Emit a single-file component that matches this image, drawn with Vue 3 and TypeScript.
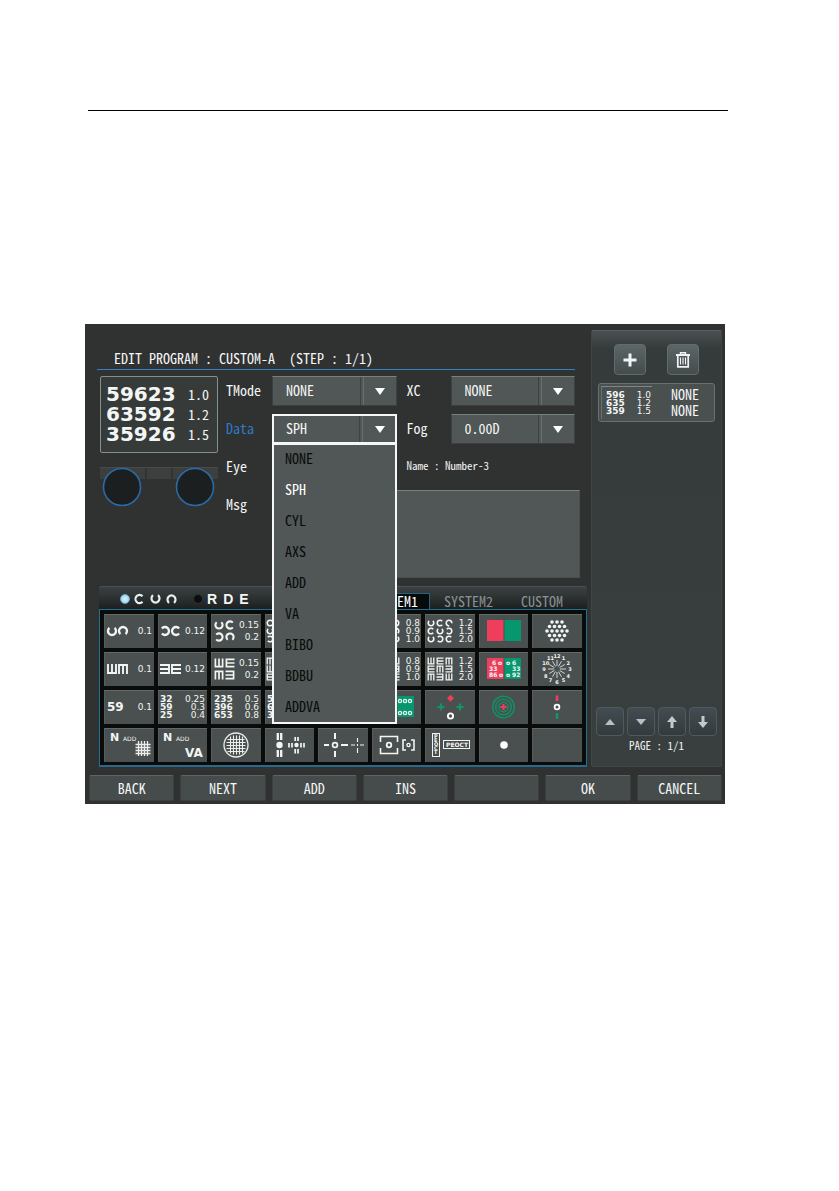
<script setup lang="ts">
import { ref } from 'vue'

interface Optotype { kind: 'C' | 'E'; x: number; y: number; turn: number; size: number }
interface Label { text: string; x: number; y: number; size: number; bold?: boolean; end?: boolean }
interface Chart { id: string; title: string; marks: Optotype[]; labels: Label[]; art?: string }

const dataOptions = ['NONE', 'SPH', 'CYL', 'AXS', 'ADD', 'VA', 'BIBO', 'BDBU', 'ADDVA']
const data = ref('SPH')
const open = ref(true)
const tmode = ref('NONE')
const xc = ref('NONE')
const fog = ref('0.00D')
const eye = ref('')
const message = ref('')
const filter = ref('c')
const activeTab = ref('SYSTEM1')
const tabs = ['SYSTEM1', 'SYSTEM2', 'CUSTOM']
const footer = ['BACK', 'NEXT', 'ADD', 'INS', '', 'OK', 'CANCEL']
const preview = [['59623', '1.0'], ['63592', '1.2'], ['35926', '1.5']]

function pick(option: string) {
  data.value = option
  open.value = false
}

const num = (text: string, y: number): Label => ({ text, x: 48, y, size: 9, end: true })
const single = (kind: 'C' | 'E', turns: number[], va: string): Chart => ({
  id: '', title: `${kind} chart ${va}`,
  marks: turns.map((turn, i) => ({ kind, x: 8 + i * 11, y: 17, turn, size: 10 })),
  labels: [num(va, 20)]
})
const double = (kind: 'C' | 'E', turns: number[]): Chart => ({
  id: '', title: `${kind} chart 0.15`,
  marks: turns.map((turn, i) => ({ kind, x: 8 + (i % 2) * 11, y: 11 + Math.floor(i / 2) * 12, turn, size: 9 })),
  labels: [num('0.15', 14), num('0.2', 26)]
})
const triple = (kind: 'C' | 'E', turns: number[], va: string[]): Chart => ({
  id: '', title: `${kind} chart`,
  marks: turns.map((turn, i) => ({ kind, x: 6 + (i % 3) * 9, y: 9 + Math.floor(i / 3) * 8, turn, size: 7 })),
  labels: va.map((v, i) => num(v, 12 + i * 8))
})
const digits = (rows: string[], va: string[]): Chart => ({
  id: '', title: 'Number chart', marks: [],
  labels: [
    ...rows.map((r, i): Label => ({ text: r, x: 3, y: 12 + i * 8, size: 9, bold: true })),
    ...va.map((v, i) => num(v, 12 + i * 8))
  ]
})
const art = (name: string, title: string, labels: Label[] = []): Chart => ({ id: '', title, marks: [], labels, art: name })

const charts: Chart[] = [
  single('C', [270, 90], '0.1'),
  single('C', [180, 0], '0.12'),
  double('C', [270, 0, 180, 90]),
  triple('C', [0, 90, 180, 270, 0, 90, 180, 0, 270], []),
  triple('C', [0, 90, 180, 270, 0, 90, 180, 0, 270], []),
  triple('C', [0, 90, 180, 270, 0, 90, 180, 0, 270], ['0.8', '0.9', '1.0']),
  triple('C', [270, 0, 45, 0, 270, 180, 270, 180, 0], ['1.2', '1.5', '2.0']),
  art('redgreen', 'Red-green'),
  art('dots', 'Dots'),
  single('E', [270, 90], '0.1'),
  single('E', [180, 0], '0.12'),
  double('E', [270, 0, 90, 180]),
  triple('E', [90, 0, 90, 270, 180, 0, 0, 90, 270], []),
  triple('E', [0, 90, 180, 270, 0, 90, 180, 0, 270], []),
  triple('E', [0, 90, 270, 270, 0, 180, 180, 90, 0], ['0.8', '0.9', '1.0']),
  triple('E', [270, 0, 90, 0, 90, 180, 90, 180, 270], ['1.2', '1.5', '2.0']),
  art('rgdigits', 'Red-green numbers'),
  art('clock', 'Astigmatism clock'),
  { id: '', title: 'Number chart 0.1', marks: [], labels: [{ text: '59', x: 3, y: 21, size: 12, bold: true }, num('0.1', 20)] },
  digits(['32', '59', '25'], ['0.25', '0.3', '0.4']),
  digits(['235', '396', '653'], ['0.5', '0.6', '0.8']),
  digits(['5', '6', '3'], []),
  digits([], []),
  art('rgdots', 'Red-green balance'),
  art('worth', 'Worth four dots'),
  art('rings', 'Rings'),
  art('schober', 'Vertical dots'),
  art('neargrid', 'Near ADD grid', [{ text: 'N', x: 6, y: 13, size: 11, bold: true }, { text: 'ADD', x: 19, y: 13, size: 6 }]),
  art('none', 'Near ADD VA', [{ text: 'N', x: 6, y: 13, size: 11, bold: true }, { text: 'ADD', x: 19, y: 13, size: 6 }, { text: 'VA', x: 28, y: 29, size: 12, bold: true }]),
  art('amsler', 'Cross grid'),
  art('bars', 'Bar phoria'),
  art('cross', 'Cross phoria'),
  art('frames', 'Aniseikonia'),
  art('fixation', 'Fixation disparity'),
  art('point', 'Fixation point'),
  art('none', 'Empty')
].map((c, i) => ({ ...c, id: `chart-${i}` }))

const dotRows = [3, 4, 5, 4, 3].flatMap((n, r) =>
  Array.from({ length: n }, (_, i) => ({ x: 25 + (i - (n - 1) / 2) * 5, y: 8 + r * 4.5 })))
const hours = Array.from({ length: 12 }, (_, i) => {
  const a = ((i + 1) * Math.PI) / 6
  return { n: i + 1, sx: Math.sin(a), sy: -Math.cos(a) }
})
</script>

<template>
  <main class="page">
    <hr class="rule" />
    <section class="device">
      <div class="upper">
        <div class="work">
          <h1 class="title">EDIT PROGRAM : CUSTOM-A&nbsp; (STEP : 1/1)</h1>
          <div class="setup">
            <div class="left">
              <div class="preview">
                <div v-for="row in preview" :key="row[0]" class="preview-row">
                  <b>{{ row[0] }}</b><span>{{ row[1] }}</span>
                </div>
              </div>
              <svg class="lenses" width="118" height="42" viewBox="0 0 118 42" aria-hidden="true">
                <rect y="0" width="118" height="12" fill="#3d3f3f" />
                <path d="M46 0V12M72 0V12" stroke="#292a2a" />
                <path d="M0 .5H118" stroke="#484a4a" />
                <circle cx="22" cy="20" r="18.5" fill="#1b1f1f" stroke="#2a6ba5" stroke-width="1.6" />
                <circle cx="95" cy="20" r="18.5" fill="#1b1f1f" stroke="#2a6ba5" stroke-width="1.6" />
              </svg>
            </div>
            <form class="form" @submit.prevent>
              <div class="row">
                <label for="tmode">TMode</label>
                <div class="pick">
                  <select id="tmode" v-model="tmode"><option>NONE</option></select>
                  <svg class="arrow" width="10" height="8" viewBox="0 0 10 8"><path d="M0 0H10L5 7Z" fill="#fff" /></svg>
                </div>
                <label class="second" for="xc">XC</label>
                <div class="pick">
                  <select id="xc" v-model="xc"><option>NONE</option></select>
                  <svg class="arrow" width="10" height="8" viewBox="0 0 10 8"><path d="M0 0H10L5 7Z" fill="#fff" /></svg>
                </div>
              </div>
              <div class="row">
                <label class="current" for="data">Data</label>
                <div class="pick opened">
                  <select id="data" v-model="data" @mousedown.prevent="open = !open">
                    <option v-for="o in dataOptions" :key="o">{{ o }}</option>
                  </select>
                  <svg class="arrow" width="10" height="8" viewBox="0 0 10 8"><path d="M0 0H10L5 7Z" fill="#fff" /></svg>
                  <ul v-if="open" class="menu" role="listbox" aria-label="Data">
                    <li v-for="o in dataOptions" :key="o" role="option" :aria-selected="o === data" :class="{ chosen: o === data }" @click="pick(o)">{{ o }}</li>
                  </ul>
                </div>
                <label class="second" for="fog">Fog</label>
                <div class="pick">
                  <select id="fog" v-model="fog"><option>0.00D</option></select>
                  <svg class="arrow" width="10" height="8" viewBox="0 0 10 8"><path d="M0 0H10L5 7Z" fill="#fff" /></svg>
                </div>
              </div>
              <div class="row">
                <label for="eye">Eye</label>
                <div class="pick">
                  <select id="eye" v-model="eye"><option></option></select>
                </div>
                <span class="name">Name : Number-3</span>
              </div>
              <div class="row message">
                <label for="msg">Msg</label>
                <textarea id="msg" v-model="message"></textarea>
              </div>
            </form>
          </div>
          <div class="charts">
            <div class="bar">
              <div class="filters">
                <label class="filter">
                  <input v-model="filter" type="radio" name="filter" value="c" aria-label="Landolt rings" />
                  <svg width="44" height="12" viewBox="0 0 44 12" fill="none" stroke="#e8eded" stroke-width="2.2">
                    <path d="M8.5 3.2A4 4.2 0 1 0 8.5 8.8" />
                    <path d="M19 2.2A4 4.2 0 1 0 24 2.2" />
                    <path d="M35 9.8A4 4.2 0 1 1 40 9.8" />
                  </svg>
                </label>
                <label class="filter">
                  <input v-model="filter" type="radio" name="filter" value="r" />
                  <span class="letters"><b>R</b><b>D</b><b>E</b></span>
                </label>
              </div>
              <div class="tabs" role="tablist">
                <button v-for="t in tabs" :key="t" type="button" role="tab" :aria-selected="t === activeTab" :class="{ active: t === activeTab }" @click="activeTab = t">{{ t }}</button>
              </div>
            </div>
            <div class="grid">
              <button v-for="c in charts" :key="c.id" type="button" class="cell" :aria-label="c.title">
                <svg width="50" height="34" viewBox="0 0 50 34" fill="none">
                  <g v-for="(m, i) in c.marks" :key="i" :transform="`translate(${m.x} ${m.y}) rotate(${m.turn}) scale(${m.size / 9})`" stroke="#f1f5f4">
                    <path v-if="m.kind === 'C'" d="M2.8 -2.3A3.6 3.6 0 1 0 2.8 2.3" stroke-width="2.1" />
                    <path v-else d="M4.5 -3.6H-3.6V3.6H4.5M-4 0H4.5" stroke-width="1.7" />
                  </g>
                  <g v-if="c.art === 'redgreen' || c.art === 'rgdigits' || c.art === 'rgdots'">
                    <path d="M8 6H25V27H8Z" fill="#ee3e5b" />
                    <path d="M25 6H42V27H25Z" fill="#07976f" />
                    <path d="M25 6V27" stroke="#46504e" />
                  </g>
                  <g v-if="c.art === 'rgdigits'" class="tiny">
                    <text x="13" y="13">6</text><text x="19" y="13">o</text>
                    <text x="10" y="19">33</text>
                    <text x="10" y="25">86</text><text x="20" y="25">o</text>
                    <text x="27" y="13">o</text><text x="33" y="13">6</text>
                    <text x="33" y="19">33</text>
                    <text x="27" y="25">o</text><text x="33" y="25">92</text>
                  </g>
                  <g v-if="c.art === 'rgdots'" stroke="#e5f2ee" stroke-width="1.3">
                    <circle v-for="x in [12, 17, 22, 28, 33, 38]" :key="x" :cx="x" cy="11" r="1.6" />
                    <circle v-for="x in [12, 17, 22, 28, 33, 38]" :key="-x" :cx="x" cy="23" r="1.6" />
                  </g>
                  <g v-if="c.art === 'dots'" fill="#f1f5f4">
                    <circle v-for="(d, i) in dotRows" :key="i" :cx="d.x" :cy="d.y" r="1.8" />
                  </g>
                  <g v-if="c.art === 'clock'" class="tiny mid">
                    <path v-for="h in hours" :key="h.n" :d="`M${25 + h.sx * 3} ${17 + h.sy * 3}L${25 + h.sx * 9} ${17 + h.sy * 9}`" stroke="#dfe5e3" stroke-width="0.9" />
                    <text v-for="h in hours" :key="-h.n" :x="25 + h.sx * 13" :y="19 + h.sy * 13">{{ h.n }}</text>
                  </g>
                  <g v-if="c.art === 'worth'">
                    <path d="M25.5 4.8L29 8.3L25.5 11.8L22 8.3Z" fill="#ee3e5b" />
                    <path d="M16 13.5V20.5M12.5 17H19.5M35 13.5V20.5M31.5 17H38.5" stroke="#129463" stroke-width="2.2" />
                    <circle cx="25.5" cy="26" r="2.6" stroke="#fff" stroke-width="1.9" />
                  </g>
                  <g v-if="c.art === 'rings'" stroke="#118f63" stroke-width="1.5">
                    <circle cx="24.5" cy="17" r="10.8" /><circle cx="24.5" cy="17" r="7.8" /><circle cx="24.5" cy="17" r="4.7" />
                    <path d="M24.5 14V20M21.5 17H27.5" stroke="#ee3e5b" stroke-width="2" />
                  </g>
                  <g v-if="c.art === 'schober'" stroke-width="2.6">
                    <path d="M25 5.5V11" stroke="#ee3e5b" /><path d="M25 23V29" stroke="#129463" />
                    <circle cx="25" cy="17" r="2.4" stroke="#fff" stroke-width="1.8" />
                  </g>
                  <g v-if="c.art === 'neargrid'" stroke="#e9eeec" stroke-width="1.3">
                    <path d="M34.500 13V28M37.500 13V28M40.500 13V28M43.500 13V28M31.500 16.500H46.500M31.500 19.500H46.500M31.500 22.500H46.500M31.500 25.500H46.500" />
                  </g>
                  <g v-if="c.art === 'amsler'" stroke="#e9eeec" stroke-width="1.1">
                    <circle cx="25" cy="17" r="12" stroke-width="1.3" />
                    <path d="M19.500 8.500V25.500M22.500 7.500V26.500M25.500 7.500V26.500M28.500 7.500V26.500M31.500 8.500V25.500M16.500 11.500H33.500M15.500 14.500H34.500M15.500 17.500H34.500M15.500 20.500H34.500M16.500 23.500H33.500" />
                  </g>
                  <g v-if="c.art === 'bars'" stroke="#f1f5f4">
                    <circle cx="15.500" cy="17" r="3.200" fill="#f1f5f4" stroke="none" />
                    <path d="M13.800 5V12M17.200 5V12M13.800 22V29M17.200 22V29" stroke-width="2.300" />
                    <circle cx="32.500" cy="17" r="2.200" fill="#f1f5f4" stroke="none" />
                    <path d="M25 15V19.500M28 15V19.500M37 15V19.500M40 15V19.500M31.200 9V13M34 9V13M31.200 21V25.500M34 21V25.500" stroke-width="1.700" />
                  </g>
                  <g v-if="c.art === 'cross'" stroke="#f1f5f4">
                    <circle cx="17" cy="17" r="2.400" stroke-width="1.700" />
                    <path d="M6 17H11M23 17H30M17 5V11M17 23V29" stroke-width="2" />
                    <path d="M33 17H37M42 17H46M39.500 10V14M39.500 20V25M39.500 16V18" stroke-width="1.100" />
                  </g>
                  <g v-if="c.art === 'frames'" stroke="#f1f5f4">
                    <path d="M8.500 14V8.500H25.500V14M25.500 20V25.500H8.500V20" stroke-width="1.600" />
                    <circle cx="17" cy="17" r="2.300" stroke-width="1.800" />
                    <path d="M34 12H31V22H34M39 12H42V22H39" stroke-width="1.600" />
                    <circle cx="36.500" cy="17" r="1.600" stroke-width="1.400" />
                  </g>
                  <g v-if="c.art === 'fixation'" class="tiny">
                    <rect x="7.500" y="5.500" width="7" height="23" stroke="#f1f5f4" />
                    <text v-for="(l, i) in ['P', 'E', 'O', 'C', 'T']" :key="l" class="stacked" x="9" :y="10 + i * 4">{{ l }}</text>
                    <rect x="18.500" y="12.500" width="26" height="8" stroke="#f1f5f4" />
                    <text x="21" y="19">PEOCT</text>
                  </g>
                  <circle v-if="c.art === 'point'" cx="25" cy="17" r="3.800" fill="#fff" />
                  <text v-for="(l, i) in c.labels" :key="`t${i}`" class="chart-text" :class="{ bold: l.bold, end: l.end }" :x="l.x" :y="l.y" :font-size="l.size">{{ l.text }}</text>
                </svg>
              </button>
            </div>
          </div>
        </div>
        <aside class="side">
          <div class="tools">
            <button type="button" aria-label="Add step">
              <svg width="14" height="14" viewBox="0 0 14 14"><path d="M7 0.500V13.500M0.500 7H13.500" stroke="#f0f4f4" stroke-width="3" /></svg>
            </button>
            <button type="button" aria-label="Delete step">
              <svg width="16" height="16" viewBox="0 0 16 16" fill="none" stroke="#eef2f2">
                <path d="M5.500 2V.800H10.500V2" stroke-width="1.400" /><path d="M1 3H15" stroke-width="2" />
                <path d="M2.800 4V14.800H13.200V4" stroke-width="1.700" /><path d="M5.500 5.500V12.500M8 5.500V12.500M10.500 5.500V12.500" stroke-width="1.100" />
              </svg>
            </button>
          </div>
          <button type="button" class="step">
            <span class="thumb">
              <span><b>596</b><i>1.0</i></span><span><b>635</b><i>1.2</i></span><span><b>359</b><i>1.5</i></span>
            </span>
            <span class="modes"><span>NONE</span><span>NONE</span></span>
          </button>
          <div class="pager">
            <button type="button" aria-label="Page up"><svg width="10" height="12" viewBox="0 0 10 12"><path d="M0 9H10L5 3Z" fill="#b9bfc0" /></svg></button>
            <button type="button" aria-label="Page down"><svg width="10" height="12" viewBox="0 0 10 12"><path d="M0 3H10L5 9Z" fill="#b9bfc0" /></svg></button>
            <button type="button" aria-label="Move up"><svg width="10" height="12" viewBox="0 0 10 12"><path d="M5 0L10 6H6.500V12H3.500V6H0Z" fill="#c3c9ca" /></svg></button>
            <button type="button" aria-label="Move down"><svg width="10" height="12" viewBox="0 0 10 12"><path d="M5 12L10 6H6.500V0H3.500V6H0Z" fill="#c3c9ca" /></svg></button>
          </div>
          <p class="page-count">PAGE : 1/1</p>
        </aside>
      </div>
      <nav class="footer">
        <button v-for="(f, i) in footer" :key="i" type="button" :aria-label="f || 'Unassigned'">{{ f }}</button>
      </nav>
    </section>
  </main>
</template>

<style>
body { background: #fff; }
</style>

<style scoped>
* { box-sizing: border-box; }
.page { padding: 110px 114px 40px 85px; }
.rule { height: 1px; border: 0; margin: 0 -3px 213px 3px; background: #000; }
.device, .device button, .device select {
  font-family: "Noto Sans Mono CJK JP", "Noto Sans CJK JP", "Liberation Mono", monospace;
  font-feature-settings: "hwid";
  font-size: 14px;
  font-weight: 500;
  color: #f4f6f6;
}
.device { background: #303131; padding: 6px 3px 3px 4px; }
.device button { cursor: pointer; padding: 0; }
.upper { display: flex; }
.work { flex: 1; min-width: 0; padding: 0 4px 0 8px; }
.title { margin: 0 12px 6px 0; padding: 18px 0 0 17px; height: 40px; line-height: 20px; font-size: 14px; font-weight: 500; white-space: nowrap; border-bottom: 1px solid #3584c6; }
.setup { display: flex; gap: 8px; padding: 0 7px 0 3px; margin-bottom: 8px; }
.left { width: 118px; }
.preview { height: 77px; border: 1px solid #84908b; border-radius: 2px; background: #363b3a; padding: 8px 8px 8px 5px; display: flex; flex-direction: column; justify-content: space-between; }
.preview-row { display: flex; justify-content: space-between; align-items: center; height: 19px; }
.preview-row b { font: bold 20px/19px "DejaVu Sans", sans-serif; }
.preview-row span { font-size: 14px; line-height: 16px; padding-bottom: 2px; font-weight: 400; }
.lenses { display: block; margin-top: 14px; }
.form { flex: 1; min-width: 0; display: flex; flex-direction: column; gap: 8px; }
.row { display: grid; grid-template-columns: 46px minmax(0, 1fr) 54px minmax(0, 1fr); height: 30px; padding-right: 5px; }
.row label { line-height: 28px; }
.row .second { padding-left: 10px; }
.row .current { color: #2c7cc4; }
.name { grid-column: 3 / 5; padding-left: 10px; font-size: 11px; line-height: 26px; font-weight: 400; white-space: nowrap; }
.pick { position: relative; display: flex; background: #505756; border: 1px solid #3b4040; border-top-color: #77807d; }
.pick::after { content: ""; position: absolute; top: 0; bottom: 0; right: 32px; width: 2px; border-left: 1px solid #3c4443; border-right: 1px solid #69716f; pointer-events: none; }
.pick select { appearance: none; flex: 1; min-width: 0; border: 0; outline: 0; background: transparent; padding: 0 36px 2px 13px; }
.arrow { position: absolute; right: 11px; top: 11px; pointer-events: none; }
.opened { border: 2px solid #f5f7f6; z-index: 2; }
.opened select { padding-left: 12px; }
.opened .arrow { right: 10px; top: 10px; }
.menu { position: absolute; z-index: 3; top: 27px; left: -2px; right: -2px; margin: 0; padding: 0 0 2px; list-style: none; background: #505756; border: 2px solid #f5f7f6; }
.menu li { line-height: 27px; padding-left: 11px; color: #080a0a; cursor: pointer; }
.menu li + li { margin-top: 4px; }
.menu .chosen { color: #fff; }
.row.message { grid-template-columns: 46px minmax(0, 1fr); height: 88px; padding: 0; }
textarea { resize: none; border: 1px solid #474e4c; border-top-color: #78807e; background: #505756; color: #fff; padding: 6px; outline: 0; }
.charts { margin: 0 0 0 2px; }
.bar { height: 23px; display: flex; justify-content: space-between; border-top: 1px solid #4b5152; border-radius: 3px 3px 0 0; background: linear-gradient(#3b4142, #1c2021); }
.filters { display: flex; align-items: center; gap: 15px; padding: 2px 0 0 21px; }
.filter { display: flex; align-items: center; gap: 4px; }
.filter input { appearance: none; width: 10px; height: 10px; margin: 0; border-radius: 50%; background: #0b0e0f; border: 1px solid #2d3537; }
.filter input:checked { background: radial-gradient(#d5f3ff, #8ecbea); border-color: #6fa9c4; }
.letters { display: flex; gap: 6px; }
.letters b { font: bold 14px/18px "Liberation Sans", Arial, sans-serif; }
.tabs { display: flex; padding: 6px 10px 0 0; }
.tabs button { height: 16px; border: 0; background: transparent; color: #8b9192; line-height: 15px; padding: 0 14px; font-weight: 400; white-space: nowrap; }
.tabs .active { color: #fff; background: #070a0b; border: 1px solid #23637f; border-bottom: 0; padding: 0 11px; line-height: 13px; font-weight: 500; }
.grid { display: grid; grid-template-columns: repeat(9, minmax(0, 1fr)); grid-auto-rows: 34px; gap: 4px; background: #0a0c0c; border: 1px solid #22708f; border-bottom: 2px solid #2a6890; padding: 4px 4px 3px; }
.cell { display: flex; justify-content: center; overflow: hidden; border: 0; background: #4a504f; box-shadow: inset 0 1px #626967, inset 1px 0 #565d5b; }
.cell svg { flex: none; }
.chart-text { font-family: "DejaVu Sans", sans-serif; font-weight: 400; font-feature-settings: normal; fill: #f1f5f4; }
.bold { font-weight: 700; }
.end { text-anchor: end; }
.tiny text { font: bold 6px "DejaVu Sans", sans-serif; fill: #f4f8f6; }
.mid text { text-anchor: middle; font-size: 5px; }
.tiny .stacked { font-size: 5px; }
.side { width: 131px; flex: none; display: flex; flex-direction: column; padding: 13px 6px 12px; background: linear-gradient(#4a5051, #353b3b 18px, #393f3e); border: 1px solid #404646; border-top-color: #596061; border-radius: 2px; }
.tools { display: flex; justify-content: center; gap: 21px; margin-bottom: 8px; }
.tools button { width: 32px; height: 31px; display: flex; align-items: center; justify-content: center; background: linear-gradient(#5d6667, #444c4d); border: 1px solid #636c6d; border-radius: 4px; }
.step { display: flex; height: 39px; background: #4a5050; border: 1px solid #6a7070; border-radius: 3px; margin-bottom: auto; text-align: left; }
.thumb { flex: 0 0 51px; margin: 2px 0 0 2px; height: 33px; padding: 4px 1px 0 4px; border-top: 1px solid #7f8685; border-left: 1px solid #687170; }
.thumb span { display: flex; justify-content: space-between; height: 8px; }
.thumb b { font: bold 9px/8px "DejaVu Sans", sans-serif; }
.thumb i { font: normal 9px/8px "DejaVu Sans", sans-serif; }
.modes { display: flex; flex-direction: column; padding: 2px 0 0 19px; }
.modes span { line-height: 16px; }
.pager { display: flex; gap: 3px; margin: 0 -2px; }
.pager button { flex: 1; height: 29px; display: flex; align-items: center; justify-content: center; background: linear-gradient(#434c50, #333b3e); border: 1px solid #50595c; border-radius: 4px; }
.page-count { margin: 0; text-align: center; font-size: 11px; font-weight: 400; line-height: 18px; }
.footer { display: grid; grid-template-columns: repeat(7, minmax(0, 1fr)); gap: 6px; margin-top: 8px; }
.footer button { height: 26px; border: 1px solid #3a4040; border-top-color: #5d6463; background: #464c4b; border-radius: 2px; line-height: 22px; }
</style>
